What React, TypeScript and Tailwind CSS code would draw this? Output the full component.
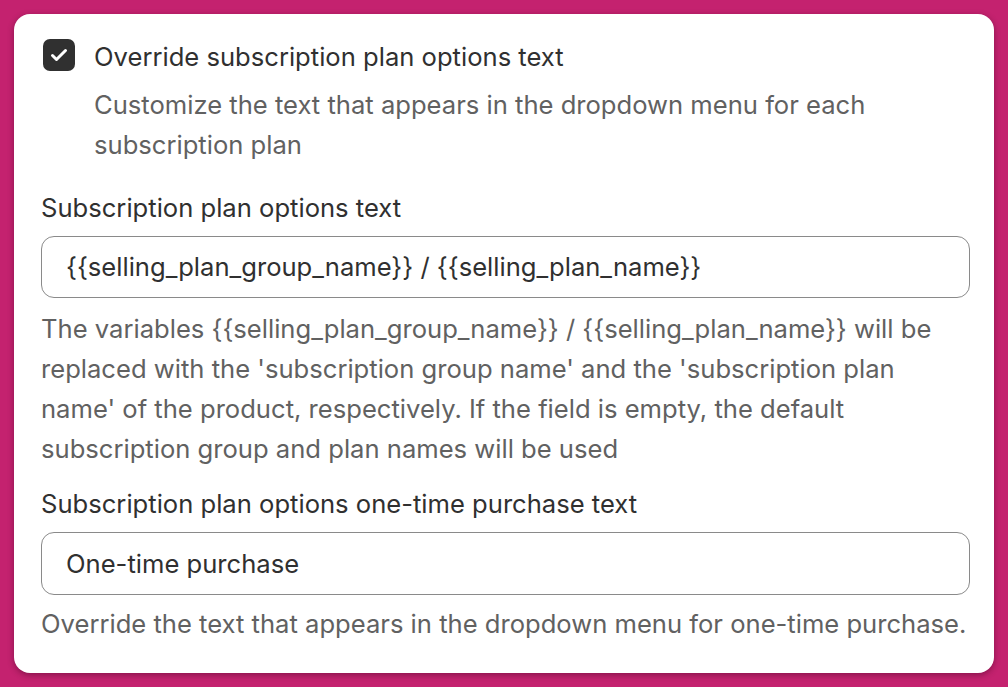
export default function App() {
  return (
    <div className="min-h-[687px] w-full bg-[#c4226f] p-[14px] font-['Inter',sans-serif] text-[25.6px] leading-[40px]">
      <div className="h-[659px] w-[980px] rounded-[16px] bg-white pl-[27px] pr-[24px] pt-[19px] shadow-[0_2px_6px_rgba(60,0,30,0.45)]">
        <div className="flex items-start">
          <div className="ml-[2px] mt-[6px] flex h-[32px] w-[32px] shrink-0 items-center justify-center rounded-[7px] bg-[#303030]">
            <svg width="20" height="20" viewBox="0 0 20 20" fill="none">
              <path d="M3.5 10.5l4 4L16.5 5.5" stroke="white" strokeWidth="3" strokeLinecap="round" strokeLinejoin="round" />
            </svg>
          </div>
          <div className="ml-[19px] pt-[4px]">
            <div className="text-[#303030]">Override subscription plan options text</div>
            <div className="mt-[8px] text-[#616161]">
              Customize the text that appears in the dropdown menu for each
              <br />
              subscription plan
            </div>
          </div>
        </div>

        <div className="mt-[23px] text-[#303030]">Subscription plan options text</div>
        <div className="mt-[8px] flex h-[62px] items-center rounded-[13px] border border-[#8a8a8a] px-[24px] text-[#303030]">
          {'{{selling_plan_group_name}} / {{selling_plan_name}}'}
        </div>
        <div className="mt-[11px] text-[#616161]">
          {"The variables {{selling_plan_group_name}} / {{selling_plan_name}} will be replaced with the 'subscription group name' and the 'subscription plan name' of the product, respectively. If the field is empty, the default subscription group and plan names will be used"}
        </div>

        <div className="mt-[15px] text-[#303030]">Subscription plan options one-time purchase text</div>
        <div className="mt-[8px] flex h-[63px] items-center rounded-[13px] border border-[#8a8a8a] px-[24px] text-[#303030]">
          One-time purchase
        </div>
        <div className="mt-[9px] text-[#616161]">
          Override the text that appears in the dropdown menu for one-time purchase.
        </div>
      </div>
    </div>
  );
}
